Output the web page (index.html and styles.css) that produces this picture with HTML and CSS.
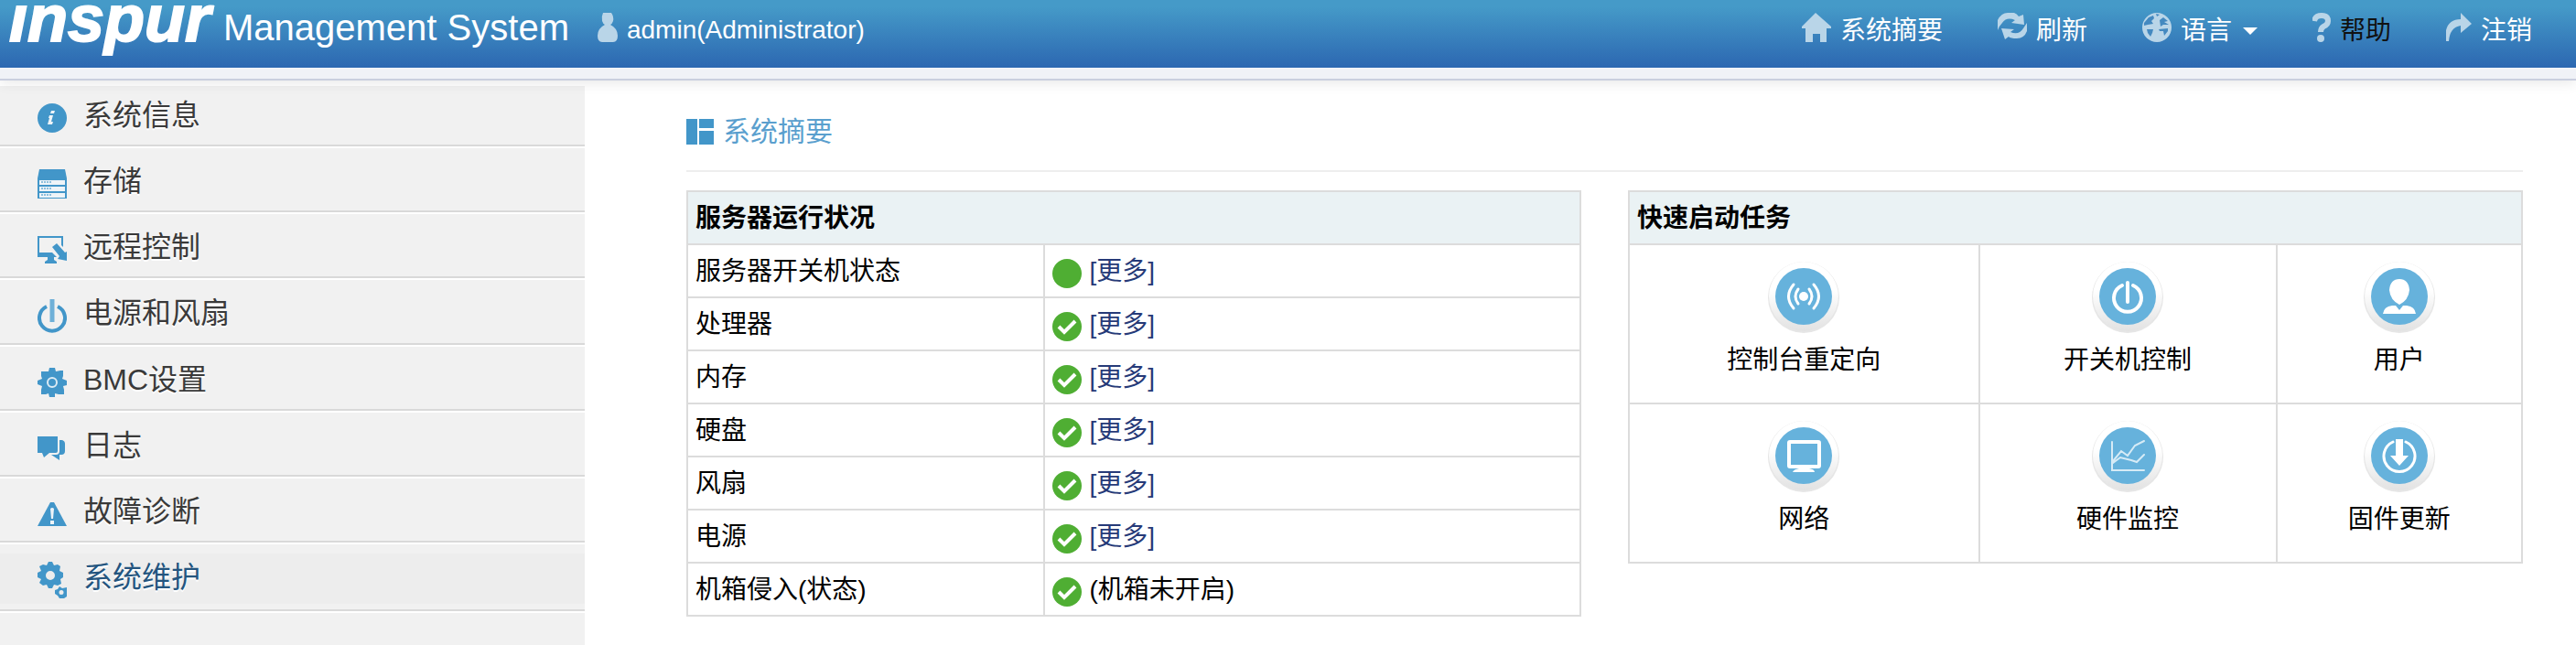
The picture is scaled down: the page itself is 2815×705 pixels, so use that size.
FILE: index.html
```html
<!DOCTYPE html>
<html lang="zh-CN">
<head>
<meta charset="utf-8">
<title>Management System</title>
<link rel="stylesheet" href="styles.css">
</head>
<body>
<svg class="defs" aria-hidden="true">
  <defs>
    <linearGradient id="ring" x1="0" y1="0" x2="0" y2="1">
      <stop offset="0.4" stop-color="#fff"/><stop offset="1" stop-color="#e2e2e2"/>
    </linearGradient>
    <symbol id="disc" viewBox="0 0 80 80">
      <circle cx="40" cy="41" r="39" fill="#e6e6e6"/>
      <circle cx="40" cy="40" r="38" fill="url(#ring)"/>
      <circle cx="40" cy="40" r="31" fill="#66b2dc"/>
    </symbol>
    <symbol id="ok" viewBox="0 0 32 32">
      <circle cx="16" cy="16" r="16" fill="#4fae33"/>
      <path d="M7 16 L13 22 L25 10" fill="none" stroke="#fff" stroke-width="4"/>
    </symbol>
    <symbol id="on" viewBox="0 0 32 32"><circle cx="16" cy="16" r="16" fill="#4fae33"/></symbol>
  </defs>
</svg>

<header class="topbar">
  <div class="topbar-inner">
    <div class="logo" role="img" aria-label="inspur">ınspur</div>
    <h1 class="brand">Management System</h1>
    <div class="account">
      <svg width="22" height="32" viewBox="0 0 22 32"><path d="M6 0H15Q18 4 17 9Q16 12 14 13Q22 17 22 25Q22 32 17 32H5Q0 32 0 25Q0 17 8 13Q6 12 5 9Q4 4 6 0Z"/></svg>
      <span>admin(Administrator)</span>
    </div>
    <nav class="topnav">
      <a href="#"><svg width="32" height="32" viewBox="0 0 32 32"><path d="M15 0L32 15V17H27V32H20V23H12V32H4V17H0V15Z"/></svg>系统摘要</a>
      <a href="#"><svg width="32" height="32" viewBox="0 0 32 32"><path d="M0 19V8Q4 0 11 0H18Q21 1 23 4L28 2L29 13L15 11L19 8Q10 4 5 11Q2 14 0 19ZM32 11V20Q29 28 21 28Q14 28 12 26L8 29L4 17L18 18L14 21Q23 25 28 17Z"/></svg>刷新</a>
      <a href="#"><svg width="32" height="32" viewBox="0 0 32 32"><circle cx="16" cy="16" r="16"/><path class="land" d="M2 11L7 5L12 3L13 6L10 9L12 12L6 13L2 14ZM5 18L12 18L11 22L9 26L6 22ZM19 8L23 5L28 9L24 10L29 13L23 13L20 15ZM18 18L28 17L28 20L24 25L23 20H19ZM15 1L19 2L16 4Z"/></svg>语言<i class="caret"></i></a>
      <a href="#" class="dark"><svg width="20" height="32" viewBox="0 0 20 32"><path class="line" d="M2 9Q3 3 10 3Q17 3 17 9Q17 13 12 15Q9 17 9 21"/><circle cx="9" cy="28" r="4"/></svg>帮助</a>
      <a href="#"><svg width="28" height="32" viewBox="0 0 28 32"><path d="M0 31V19Q3 7 16 7V0L28 12L16 22V14Q4 16 3 31Z"/></svg>注销</a>
    </nav>
  </div>
</header>

<div class="layout">
  <nav class="sidebar">
    <ul>
      <li><a href="#"><svg width="32" height="32" viewBox="0 0 32 32"><circle cx="16" cy="16" r="16"/><path class="light" d="M15 8H19L18 11H14ZM13 13H17L15 20H17L16 23H11L13 16H12Z"/></svg>系统信息</a></li>
      <li><a href="#"><svg width="32" height="32" viewBox="0 0 32 32"><path d="M2 0H30L32 10V32H0V10Z"/><path class="light" d="M2 12H30V17H2ZM2 19H30V24H2ZM2 26H30V31H2Z"/><path class="stripe" d="M4 14H15M4 21H15M4 28H15"/></svg>存储</a></li>
      <li><a href="#"><svg width="32" height="30" viewBox="0 0 32 30"><path fill-rule="evenodd" d="M0 0H28V12L26 10V2H2V18H16L21 23H18V26L21 28V30H8V28L11 26V23H0Z"/><path d="M16 12L21 8L30 18L32 17V27L22 25L24 22Z"/></svg>远程控制</a></li>
      <li class="power"><a href="#"><svg width="32" height="37" viewBox="0 0 32 37"><path class="ring" d="M10 8A14 14 0 1 0 22 8"/><path class="bar" d="M16 0V25"/></svg>电源和风扇</a></li>
      <li><a href="#"><svg width="32" height="32" viewBox="0 0 32 32"><path d="M13 0H19L20 4L25 3H28V9L27 12L32 14V19L28 20L29 24V29H23L19 28V32H13L12 28L9 29H4V24L5 20L0 18V14L5 12L4 9V4H9L12 4Z"/><circle class="hole" cx="16" cy="16" r="5"/></svg>BMC设置</a></li>
      <li><a href="#"><svg width="32" height="26" viewBox="0 0 32 26"><path d="M0 0H22V16Q22 18 20 18H13L7 23L5 18H0Z"/><path d="M24 4H27Q30 5 30 8V16Q30 20 26 20H24V26L15 20H20Q24 20 24 16Z"/></svg>日志</a></li>
      <li><a href="#"><svg width="32" height="26" viewBox="0 0 32 26"><path d="M14 0H18L32 26H0Z"/><path class="light" d="M14 7Q16 5 18 7L17 18H15ZM14 20H18V24H14Z"/></svg>故障诊断</a></li>
      <li class="active"><a href="#"><svg width="32" height="40" viewBox="0 0 32 40"><path fill-rule="evenodd" d="M12 0H16L18 4L22 3L25 5L24 10L28 12V17L25 19L26 24L22 26L18 25L16 29H12L10 25L6 26L2 23L4 19L0 17V12L4 10L2 5L6 3L10 4ZM14 10A5 5 0 1 0 14 20A5 5 0 1 0 14 10Z"/><path fill-rule="evenodd" d="M24 27L27 29L32 28V38L29 40H24L22 37L19 35V31L22 30ZM26 31A2 2 0 1 0 26 36A2 2 0 1 0 26 31Z"/></svg>系统维护</a></li>
    </ul>
  </nav>

  <main class="content">
    <h2 class="page-title"><svg width="30" height="28" viewBox="0 0 30 28"><path d="M0 0H12V28H0ZM14 0H30V10H14ZM14 13H30V28H14Z"/></svg>系统摘要</h2>
    <div class="panels">
      <table class="panel status">
        <colgroup><col class="name"><col></colgroup>
        <thead><tr><th colspan="2">服务器运行状况</th></tr></thead>
        <tbody>
          <tr><td>服务器开关机状态</td><td><div class="state"><svg><use href="#on"/></svg><a href="#">[更多]</a></div></td></tr>
          <tr><td>处理器</td><td><div class="state"><svg><use href="#ok"/></svg><a href="#">[更多]</a></div></td></tr>
          <tr><td>内存</td><td><div class="state"><svg><use href="#ok"/></svg><a href="#">[更多]</a></div></td></tr>
          <tr><td>硬盘</td><td><div class="state"><svg><use href="#ok"/></svg><a href="#">[更多]</a></div></td></tr>
          <tr><td>风扇</td><td><div class="state"><svg><use href="#ok"/></svg><a href="#">[更多]</a></div></td></tr>
          <tr><td>电源</td><td><div class="state"><svg><use href="#ok"/></svg><a href="#">[更多]</a></div></td></tr>
          <tr><td>机箱侵入(状态)</td><td><div class="state"><svg><use href="#ok"/></svg><span>(机箱未开启)</span></div></td></tr>
        </tbody>
      </table>

      <table class="panel tasks">
        <colgroup><col class="c1"><col class="c2"><col></colgroup>
        <thead><tr><th colspan="3">快速启动任务</th></tr></thead>
        <tbody>
          <tr>
            <td><a href="#"><svg viewBox="0 0 80 80"><use href="#disc"/><circle cx="40" cy="40" r="5" fill="#fff"/><path class="w3" d="M34 32Q28 40 34 48M46 32Q52 40 46 48M29 27Q18 40 29 53M51 27Q62 40 51 53"/></svg>控制台重定向</a></td>
            <td><a href="#"><svg viewBox="0 0 80 80"><use href="#disc"/><path class="w4" d="M34 28A15 15 0 1 0 46 28M40 25V46"/></svg>开关机控制</a></td>
            <td><a href="#"><svg viewBox="0 0 80 80"><use href="#disc"/><path fill="#fff" d="M40 21Q50 21 51 33Q50 44 40 49Q30 44 29 33Q30 21 40 21ZM22 59Q23 51 32 50L36 50L40 55L44 50L48 50Q57 51 58 59Z"/></svg>用户</a></td>
          </tr>
          <tr>
            <td><a href="#"><svg viewBox="0 0 80 80"><use href="#disc"/><rect class="w4" x="24" y="25" width="33" height="27" rx="1"/><path fill="#fff" d="M28 58Q29 55 35 54H46Q52 55 52 58Z"/></svg>网络</a></td>
            <td><a href="#"><svg viewBox="0 0 80 80"><use href="#disc"/><path class="w2" d="M23 25V56H58M24 46L33 35L40 40L48 29L58 24M24 48L32 42L44 45L50 47L58 39"/></svg>硬件监控</a></td>
            <td><a href="#"><svg viewBox="0 0 80 80"><use href="#disc"/><path class="w3" d="M33 25A17 17 0 1 0 47 25"/><path fill="#fff" d="M36 22H44V40H50L40 51L30 40H36Z"/></svg>固件更新</a></td>
          </tr>
        </tbody>
      </table>
    </div>
  </main>
</div>
</body>
</html>
```
FILE: styles.css
```css
* { box-sizing: border-box; }
body {
  margin: 0;
  min-height: 100vh;
  display: flex;
  flex-direction: column;
  background: #fff;
  color: #000;
  font: 28px/36px "Liberation Sans", Arial, "Noto Sans CJK SC", sans-serif;
}
a { color: inherit; text-decoration: none; }
svg { flex: none; display: block; }
.defs { position: absolute; width: 0; height: 0; }

.topbar {
  position: relative;
  z-index: 1;
  padding-bottom: 12px;
  background: #f0f2f7;
  border-bottom: 2px solid #cacfdf;
  box-shadow: 0 2px 14px rgba(0, 0, 0, 0.1);
}
.topbar-inner {
  display: flex;
  align-items: flex-start;
  height: 74px;
  padding: 0 48px 0 10px;
  background: linear-gradient(#459ac8 10%, #2c67b1);
  color: #fff;
}
.logo {
  width: 234px;
  margin-top: 4px;
  font: italic bold 72px/32px "Liberation Sans", Arial, sans-serif;
  -webkit-text-stroke: 2px #fff;
}
.brand { margin: 0; font-size: 40px; line-height: 60px; font-weight: 400; }
.account { display: flex; gap: 10px; margin-left: 31px; padding-top: 14px; line-height: 38px; }
.topnav { display: flex; gap: 60px; margin-left: auto; padding-top: 14px; line-height: 40px; }
.topnav a { display: flex; gap: 10px; }
.topnav .dark { color: #111; }
.topbar svg { fill: #b9d5e8; }
.topbar .land { fill: #4489c0; }
.topbar .line { fill: none; stroke: #b9d5e8; stroke-width: 6; }
.caret {
  margin: 16px 0 0 2px;
  height: 0;
  border: 8px solid transparent;
  border-top-color: #fff;
  border-bottom: 0;
}

.layout { flex: 1; display: flex; padding-top: 6px; }
.sidebar { width: 639px; flex: none; background: #f1f1f1; color: #3a3a3a; font-size: 32px; }
.sidebar ul { list-style: none; margin: 0; padding: 0; }
.sidebar li { padding: 10px 0 6px; border-bottom: 2px solid #d9d9d9; box-shadow: 0 2px #fff; margin-bottom: 2px; }
.sidebar li:first-child { padding-top: 6px; }
.sidebar a { display: flex; gap: 18px; padding-left: 41px; line-height: 52px; text-shadow: 0 2px #fff; }
.sidebar svg { align-self: center; margin-top: 6px; fill: #4296c9; }
.sidebar .power a { padding-bottom: 1px; }
.sidebar .active a { padding-bottom: 3px; background: #ededed; color: #24557f; }
.sidebar .light { fill: #eef4f8; }
.sidebar .hole { fill: #4296c9; stroke: #dcebf4; stroke-width: 2; }
.sidebar .stripe { stroke: #8fc0de; stroke-width: 2; stroke-dasharray: 2 1; }
.sidebar .ring { fill: none; stroke: #4296c9; stroke-width: 4; }
.sidebar .bar { stroke: #6fb0d8; stroke-width: 5; }

.content { flex: 1; min-width: 0; padding: 24px 58px 0 111px; }
.page-title {
  display: flex;
  align-items: center;
  gap: 10px;
  margin: 0 0 20px;
  padding-bottom: 16px;
  border-bottom: 2px solid #eee;
  color: #5a9fce;
  font-size: 30px;
  line-height: 52px;
  font-weight: 400;
}
.page-title svg { fill: #4296c9; }
.panels { display: grid; grid-template-columns: 1fr 1fr; gap: 51px; align-items: start; }
.panel { width: 100%; border-collapse: collapse; table-layout: fixed; }
.panel th, .panel td { height: 58px; padding: 2px 8px 0; border: 2px solid #dcdcdc; text-align: left; }
.panel th { background: #eaf2f4; font-weight: 700; }
.status .name { width: 40%; }
.state { display: flex; align-items: center; gap: 8px; }
.state svg { width: 32px; height: 32px; margin-top: 4px; }
.state a { color: #263a78; }
.tasks .c1 { width: 39.2%; }
.tasks .c2 { width: 33.3%; }
.panel.tasks td { height: 174px; padding: 16px 8px 26px; vertical-align: top; }
.tasks a { display: flex; flex-direction: column; align-items: center; gap: 12px; }
.tasks svg { width: 80px; height: 80px; }
.w2, .w3, .w4 { fill: none; stroke: #fff; stroke-linecap: round; }
.w2 { stroke: #d6ebf6; stroke-width: 2; }
.w3 { stroke-width: 3; }
.w4 { stroke-width: 4; }
```
